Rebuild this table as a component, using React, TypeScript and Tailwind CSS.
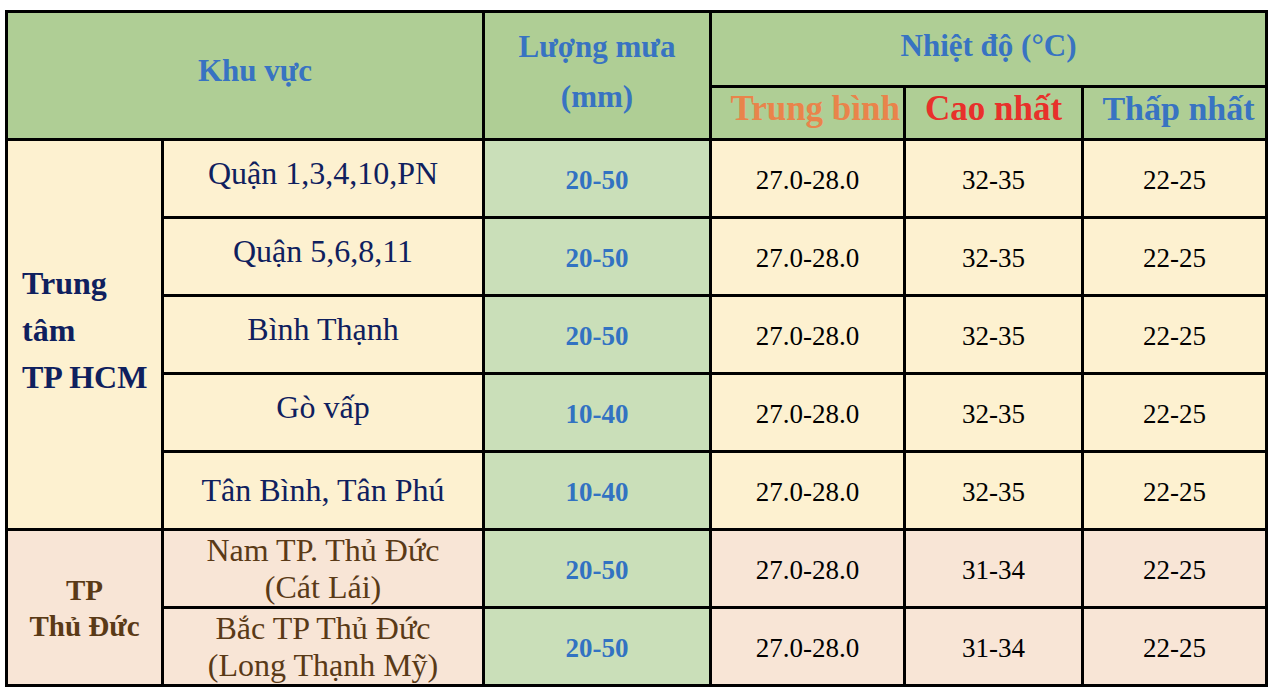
type Row = {
  area: string[];
  rain: string;
  avg: string;
  max: string;
  min: string;
  lift?: boolean;
};

const central: Row[] = [
  { area: ["Quận 1,3,4,10,PN"], rain: "20-50", avg: "27.0-28.0", max: "32-35", min: "22-25", lift: true },
  { area: ["Quận 5,6,8,11"], rain: "20-50", avg: "27.0-28.0", max: "32-35", min: "22-25", lift: true },
  { area: ["Bình Thạnh"], rain: "20-50", avg: "27.0-28.0", max: "32-35", min: "22-25", lift: true },
  { area: ["Gò vấp"], rain: "10-40", avg: "27.0-28.0", max: "32-35", min: "22-25", lift: true },
  { area: ["Tân Bình, Tân Phú"], rain: "10-40", avg: "27.0-28.0", max: "32-35", min: "22-25" },
];

const thuDuc: Row[] = [
  { area: ["Nam TP. Thủ Đức", "(Cát Lái)"], rain: "20-50", avg: "27.0-28.0", max: "31-34", min: "22-25" },
  { area: ["Bắc TP Thủ Đức", "(Long Thạnh Mỹ)"], rain: "20-50", avg: "27.0-28.0", max: "31-34", min: "22-25" },
];

const cell = "border-[3px] border-black text-center align-middle p-0";

function DataRow({ row, first, label, bg, ink }: { row: Row; first: boolean; label?: React.ReactNode; bg: string; ink: string }) {
  return (
    <tr className="h-[78px]">
      {first && label}
      <td className={`${cell} ${bg} ${ink} text-[32px] leading-[37px]`}>
        <div className={row.lift ? "pb-[10px]" : ""}>
          {row.area.map((l) => (
            <div key={l}>{l}</div>
          ))}
        </div>
      </td>
      <td className={`${cell} bg-[#cadfb9] text-[#3272c2] font-bold text-[27px] pt-[3px]`}>{row.rain}</td>
      <td className={`${cell} ${bg} text-black text-[27px] pt-[3px]`}>{row.avg}</td>
      <td className={`${cell} ${bg} text-black text-[27px] pt-[3px]`}>{row.max}</td>
      <td className={`${cell} ${bg} text-black text-[27px] pt-[3px]`}>{row.min}</td>
    </tr>
  );
}

export default function App() {
  return (
    <div className="bg-white w-[1274px] h-[692px] pt-[10px] pl-[5px] font-['Liberation_Serif',serif]">
      <table className="table-fixed border-collapse w-[1260px]">
        <colgroup>
          <col className="w-[156px]" />
          <col className="w-[321px]" />
          <col className="w-[227px]" />
          <col className="w-[194px]" />
          <col className="w-[178px]" />
          <col className="w-[184px]" />
        </colgroup>
        <thead>
          <tr className="h-[75px]">
            <th colSpan={2} rowSpan={2} className={`${cell} bg-[#afce95] text-[#3873c2] text-[31px] font-bold pb-[8px] pl-[20px]`}>
              Khu vực
            </th>
            <th rowSpan={2} className={`${cell} bg-[#afce95] text-[#3873c2] text-[31px] font-bold leading-[50px] pb-[8px]`}>
              Lượng mưa
              <br />
              (mm)
            </th>
            <th colSpan={3} className={`${cell} bg-[#afce95] text-[#3873c2] text-[31px] font-bold pb-[6px]`}>
              Nhiệt độ (°C)
            </th>
          </tr>
          <tr className="h-[53px]">
            <th className={`${cell} bg-[#afce95] text-[#e9844b] text-[35px] leading-[36px] font-bold whitespace-nowrap text-right pr-[3px] pb-[9px]`}>
              Trung bình
            </th>
            <th className={`${cell} bg-[#afce95] text-[#e8312b] text-[35px] leading-[36px] font-bold pb-[9px]`}>Cao nhất</th>
            <th className={`${cell} bg-[#afce95] text-[#3873c2] text-[34px] leading-[36px] font-bold pb-[9px] pl-[8px]`}>Thấp nhất</th>
          </tr>
        </thead>
        <tbody>
          {central.map((r, i) => (
            <DataRow
              key={r.area[0]}
              row={r}
              first={i === 0}
              bg="bg-[#fdf1d0]"
              ink="text-[#0f205e]"
              label={
                <td
                  rowSpan={5}
                  className={`${cell} bg-[#fdf1d0] text-[#0f205e] text-[32px] font-bold text-left pl-[14px] leading-[47px] pb-[8px]`}
                >
                  Trung
                  <br />
                  tâm
                  <br />
                  TP HCM
                </td>
              }
            />
          ))}
          {thuDuc.map((r, i) => (
            <DataRow
              key={r.area[0]}
              row={r}
              first={i === 0}
              bg="bg-[#f8e5d6]"
              ink="text-[#5a3a17]"
              label={
                <td rowSpan={2} className={`${cell} bg-[#f8e5d6] text-[#5a3a17] text-[29px] font-bold leading-[36px]`}>
                  TP
                  <br />
                  Thủ Đức
                </td>
              }
            />
          ))}
        </tbody>
      </table>
    </div>
  );
}
